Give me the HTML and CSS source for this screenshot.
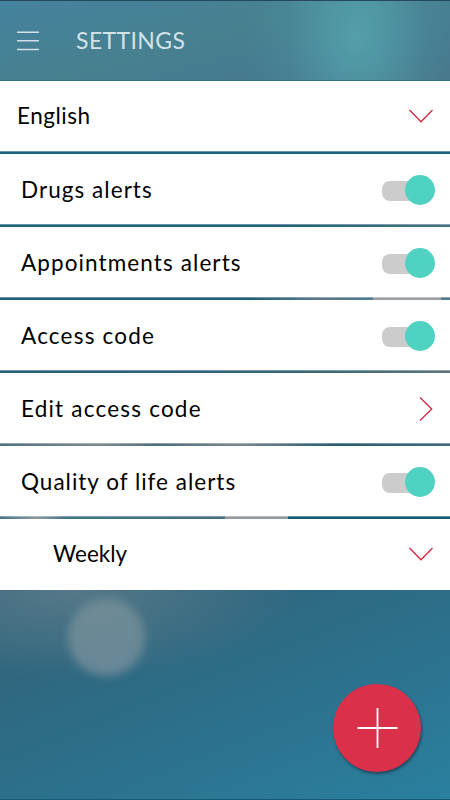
FILE: index.html
```
<!DOCTYPE html>
<html lang="en">
<head>
    <meta charset="UTF-8">
    <title>Settings</title>
    <link rel="stylesheet" href="styles.css">
</head>
<body>
    <div class="screen">
        <header class="header">
            <svg class="menu-icon" width="24" height="20" viewBox="0 0 24 20">
                <path d="M1 1.2H23M1 9.8H23M1 18.4H23" />
            </svg>
            <h1 class="title">SETTINGS</h1>
        </header>

        <div class="settings">
            <div class="row select">
                <span class="label english">English</span>
                <svg class="chevron" width="26" height="16" viewBox="0 0 26 16">
                    <path d="M1.5 2L13 13.7L24.5 2" />
                </svg>
            </div>
            <div class="divider"></div>
            <div class="row">
                <span class="label drugs">Drugs alerts</span>
                <div class="toggle"><div class="track"></div><div class="knob"></div></div>
            </div>
            <div class="divider divider-2"></div>
            <div class="row">
                <span class="label appointments">Appointments alerts</span>
                <div class="toggle"><div class="track"></div><div class="knob"></div></div>
            </div>
            <div class="divider divider-3"></div>
            <div class="row">
                <span class="label access">Access code</span>
                <div class="toggle"><div class="track"></div><div class="knob"></div></div>
            </div>
            <div class="divider divider-4"></div>
            <div class="row">
                <span class="label edit">Edit access code</span>
                <svg class="chevron" width="16" height="26" viewBox="0 0 16 26">
                    <path d="M1 1.5L12.7 13L1 24.5" />
                </svg>
            </div>
            <div class="divider divider-5"></div>
            <div class="row">
                <span class="label quality">Quality of life alerts</span>
                <div class="toggle"><div class="track"></div><div class="knob"></div></div>
            </div>
            <div class="divider divider-6"></div>
            <div class="row select sub">
                <span class="label weekly">Weekly</span>
                <svg class="chevron" width="26" height="16" viewBox="0 0 26 16">
                    <path d="M1.5 2L13 13.7L24.5 2" />
                </svg>
            </div>
        </div>

        <div class="footer">
            <div class="glow"></div>
            <div class="add-button">
                <svg width="42" height="42" viewBox="0 0 42 42">
                    <path d="M21.5 1V41M1.5 21H41.5" />
                </svg>
            </div>
        </div>
    </div>
</body>
</html>
```

FILE: styles.css
```
* {
    box-sizing: border-box;
}
body {
    margin: 0;
    font-family: Lato, "Open Sans", sans-serif;
    color: #000;
}
.screen {
    width: 450px;
    height: 800px;
    display: flex;
    flex-direction: column;
    overflow: hidden;
}
.header {
    height: 81px;
    display: flex;
    align-items: center;
    padding-left: 16px;
    border-top: 1px solid #25495a;
    border-bottom: 1px solid #33718a;
    background:
        radial-gradient(ellipse 115px 160px at 357px 34px, #549faa 0%, #529ba7bb 30%, #4f93a055 62%, #4c8b9a00 100%),
        linear-gradient(165deg, #45829e 0%, #47808f 45%, #457990 75%, #477488 100%);
}
.menu-icon path {
    fill: none;
    stroke: #d3e0e6;
    stroke-width: 1.5;
}
.title {
    margin: 0 0 2px 36px;
    font-size: 23px;
    font-weight: 400;
    line-height: 28px;
    letter-spacing: 0.4px;
    color: #d3e2e8;
}
.row {
    height: 70px;
    display: flex;
    align-items: center;
    justify-content: space-between;
    padding: 2px 15px 0 21px;
    background: #fff;
}
.select {
    padding: 0 16px 0 17px;
}
.sub {
    height: 71px;
    padding: 0 16px 1px 53px;
}
.label {
    font-size: 22.5px;
    line-height: 28px;
}
.english {
    letter-spacing: 0.5px;
}
.drugs,
.quality {
    letter-spacing: 1.05px;
}
.quality {
    letter-spacing: 1px;
}
.appointments {
    letter-spacing: 1.1px;
}
.access,
.edit {
    letter-spacing: 1.2px;
}
.chevron path {
    fill: none;
    stroke: #dc2442;
    stroke-width: 1.3;
}
/* thin strips where the background shows through */
.divider {
    height: 3px;
    border-top: 1px solid #ffffff55;
    background: #1a617c;
}
.divider-2 {
    background: linear-gradient(90deg, #1d6079 60%, #487585 100%);
}
.divider-3 {
    background: linear-gradient(90deg, #1f5f78 0 55%, #5f7a8b 72%, #4f7d92 83%, #9ea2a5 83% 98%, #527c8e 98%);
}
.divider-4 {
    background: linear-gradient(90deg, #235f77 0%, #386478 65%, #5d7580 100%);
}
.divider-5 {
    background: linear-gradient(90deg, #50717f 0%, #7e8a91 22%, #4e6d7b 35%, #7b8790 53%, #285b70 75%, #426b7d 100%);
}
.divider-6 {
    background: linear-gradient(90deg, #47768a 0%, #8c999d 8%, #42758a 15%, #437084 50%, #949a9e 50% 64%, #135c76 64%);
}
.toggle {
    display: flex;
    align-items: center;
}
.track {
    width: 40px;
    height: 20px;
    margin: 1px -17px 0 0;
    border-radius: 8px;
    background: #ccc;
}
.knob {
    width: 30px;
    height: 30px;
    border-radius: 50%;
    background: #50d2c2;
}
.footer {
    flex: 1;
    display: flex;
    align-items: flex-start;
    justify-content: space-between;
    padding: 8px 29px 0 68px;
    border-bottom: 1px solid #175a74;
    background:
        radial-gradient(ellipse 230px 90px at 70px 0, #557888 0%, #55788800 100%),
        linear-gradient(158deg, #34657b 0%, #2f677f 25%, #2c718d 58%, #2a809f 100%);
}
.glow {
    width: 77px;
    height: 78px;
    border-radius: 50%;
    background: linear-gradient(165deg, #6f8b94, #678799);
    filter: blur(5px);
}
.add-button {
    display: flex;
    align-items: center;
    justify-content: center;
    width: 88px;
    height: 88px;
    margin-top: 86px;
    border-radius: 50%;
    background: #da304a;
    box-shadow: 1px 2px 3px #1f465a;
}
.add-button path {
    fill: none;
    stroke: #fff;
    stroke-width: 1.8;
}
```
